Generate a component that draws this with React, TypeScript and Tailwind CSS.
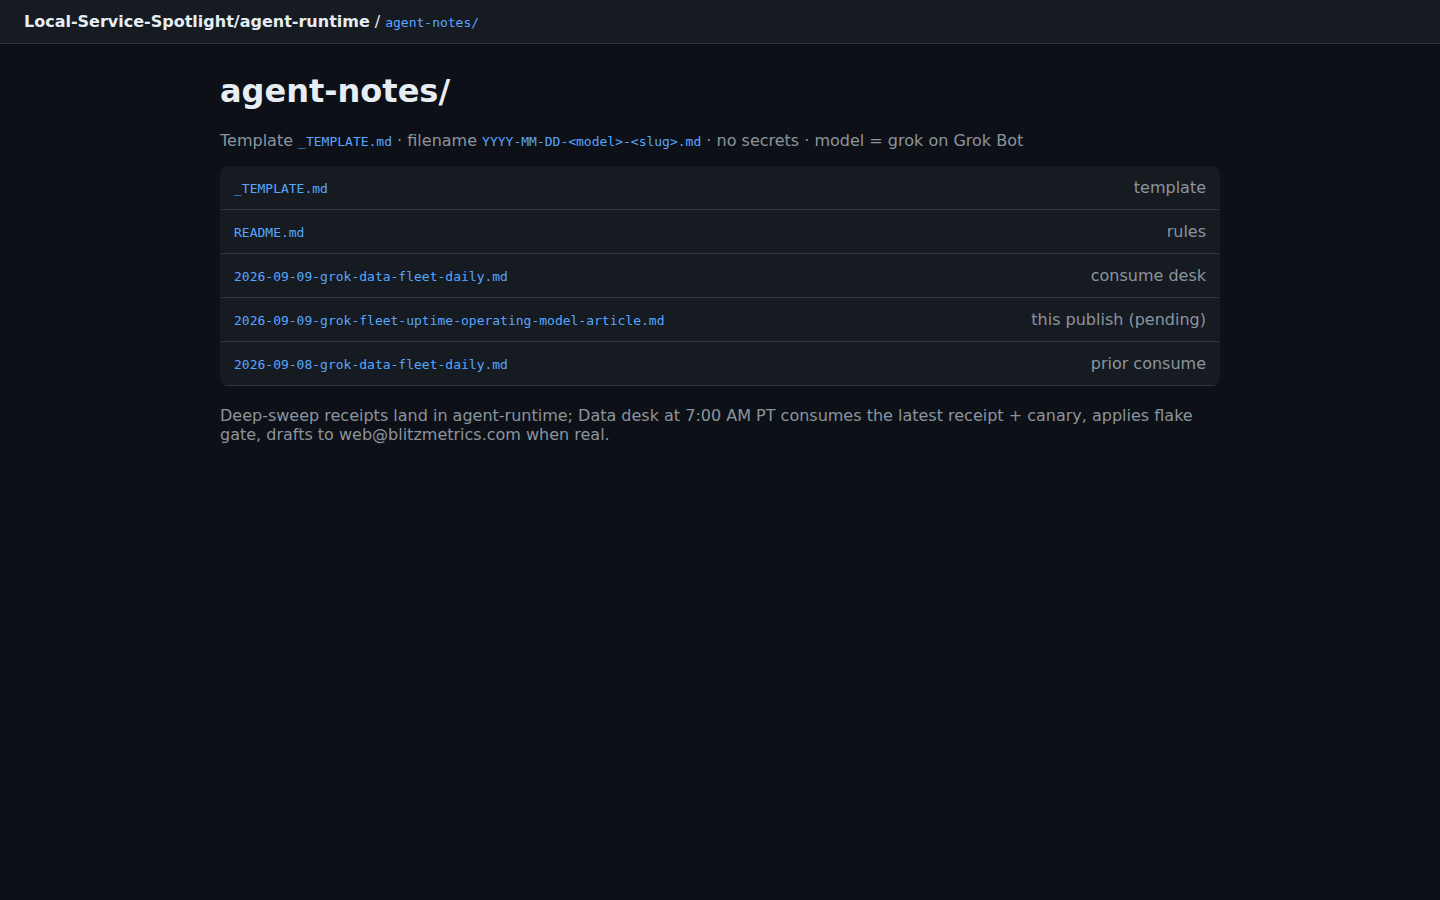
import React from "react";

const files = [
  { name: "_TEMPLATE.md", note: "template" },
  { name: "README.md", note: "rules" },
  { name: "2026-09-09-grok-data-fleet-daily.md", note: "consume desk" },
  { name: "2026-09-09-grok-fleet-uptime-operating-model-article.md", note: "this publish (pending)" },
  { name: "2026-09-08-grok-data-fleet-daily.md", note: "prior consume" },
];

const sans = "font-['DejaVu_Sans',sans-serif]";
const mono = "font-['DejaVu_Sans_Mono',monospace]";

function App() {
  return (
    <div className={`min-h-screen bg-[#0d1117] text-[#e6edf3] ${sans}`}>
      <header className="h-[44px] border-b border-[#30363d] bg-[#161b22] px-6 flex items-center">
        <span className="text-[16px] font-bold text-[#e6edf3]">Local-Service-Spotlight/agent-runtime</span>
        <span className="text-[16px] text-[#e6edf3] mx-[5px]">/</span>
        <span className={`${mono} text-[13px] text-[#58a6ff] mt-[2px]`}>agent-notes/</span>
      </header>

      <main className="max-w-[1000px] mx-auto pt-[28px]">
        <h1 className="text-[32px] leading-[38px] font-bold">agent-notes/</h1>

        <p className="mt-[19px] text-[16px] leading-[24px] text-[#8b949e]">
          Template <code className={`${mono} text-[13px] text-[#58a6ff]`}>_TEMPLATE.md</code> · filename{" "}
          <code className={`${mono} text-[13px] text-[#58a6ff]`}>YYYY-MM-DD-&lt;model&gt;-&lt;slug&gt;.md</code> · no
          secrets · model = grok on Grok Bot
        </p>

        {/* file list: each row carries its own bottom rule */}
        <div className="mt-[12px] rounded-lg bg-[#161b22] overflow-hidden">
          {files.map((f) => (
            <div key={f.name} className="h-[44px] px-[14px] flex items-center justify-between border-b border-[#30363d]">
              <span className={`${mono} text-[13px] text-[#58a6ff] mt-[2px]`}>{f.name}</span>
              <span className="text-[16px] text-[#8b949e]">{f.note}</span>
            </div>
          ))}
        </div>

        <p className="mt-[20px] text-[16px] leading-[19px] text-[#8b949e]">
          Deep-sweep receipts land in agent-runtime; Data desk at 7:00 AM PT consumes the latest receipt + canary, applies
          flake gate, drafts to web@blitzmetrics.com when real.
        </p>
      </main>
    </div>
  );
}

export default App;
